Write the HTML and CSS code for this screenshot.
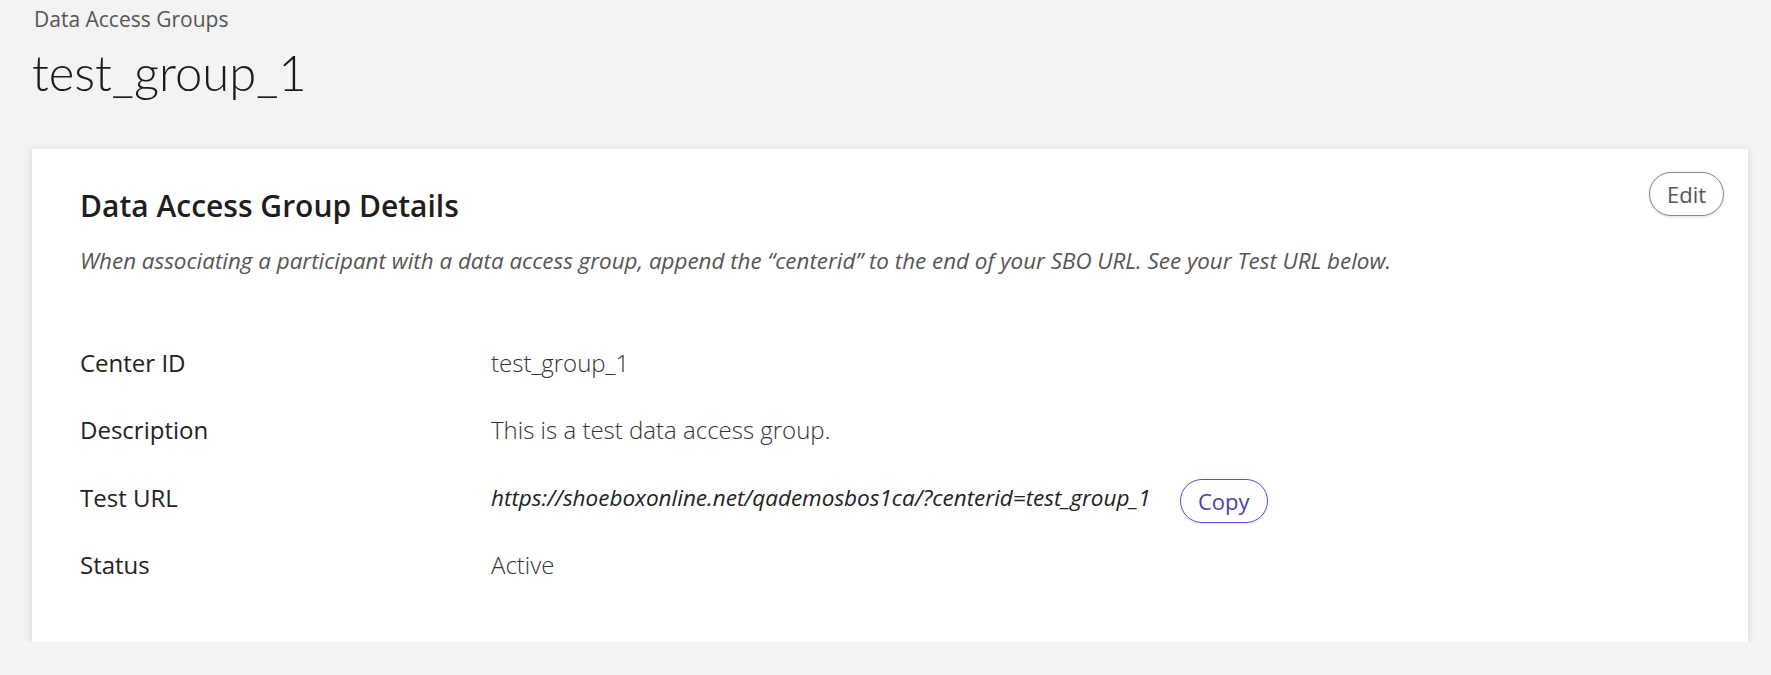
FILE: index.html
```html
<!DOCTYPE html>
<html lang="en">
  <head>
    <meta charset="UTF-8" />
    <meta name="viewport" content="width=device-width, initial-scale=1.0" />
    <title>test_group_1 - Data Access Groups</title>
    <link rel="stylesheet" href="styles.css">
  </head>
  <body>
    <div class="breadcrumb">Data Access Groups</div>
    <h1 class="page-title">test_group_1</h1>

    <section class="card">
      <div class="card-header">
        <h2>Data Access Group Details</h2>
        <button class="pill-btn edit-btn">Edit</button>
      </div>
      <p class="hint">When associating a participant with a data access group, append the “centerid” to the end of your SBO URL. See your Test URL below.</p>

      <div class="details">
        <div class="row">
          <div class="label">Center ID</div>
          <div class="value">test_group_1</div>
        </div>
        <div class="row">
          <div class="label">Description</div>
          <div class="value">This is a test data access group.</div>
        </div>
        <div class="row">
          <div class="label">Test URL</div>
          <div class="value url-cell">
            <span class="url">https://shoeboxonline.net/qademosbos1ca/?centerid=test_group_1</span>
            <button class="pill-btn copy-btn">Copy</button>
          </div>
        </div>
        <div class="row">
          <div class="label">Status</div>
          <div class="value">Active</div>
        </div>
      </div>
    </section>
  </body>
</html>
```

FILE: styles.css
```css
body {
  margin: 0;
  padding: 0 23px 0 32px;
  background-color: #f3f3f3;
  font-family: "Open Sans", "Liberation Sans", sans-serif;
  color: #222;
}

.breadcrumb {
  padding-top: 5px;
  padding-left: 2px;
  font-size: 21px;
  line-height: 28px;
  color: #555;
}

.page-title {
  margin: 10px 0 47px;
  font-family: Lato, "Open Sans", sans-serif;
  font-weight: 300;
  font-size: 49px;
  line-height: 1.2;
  color: #1a1a1a;
}

.card {
  background-color: #fff;
  padding: 23px 24px 43px 48px;
  box-shadow: 0 2px 8px rgba(0, 0, 0, 0.13);
}

.card-header {
  display: flex;
  justify-content: space-between;
  align-items: flex-start;
}

.card-header h2 {
  margin: 17px 0 0;
  font-size: 30px;
  line-height: 34px;
  font-weight: 600;
  color: #1e1e1e;
}

.hint {
  margin: 21px 0 0;
  font-size: 22.4px;
  line-height: 33px;
  font-style: italic;
  color: #555;
}

.details {
  margin-top: 52px;
}

.row {
  display: grid;
  grid-template-columns: 411px 1fr;
  padding: 17px 0 17.5px;
  font-size: 24px;
  line-height: 33px;
}

.label {
  color: #222;
}

.value {
  font-weight: 300;
  color: #333;
}

.url-cell {
  display: flex;
  align-items: flex-start;
  gap: 29px;
}

.url {
  font-size: 22.5px;
  font-style: italic;
  font-weight: 400;
  color: #222;
}

.pill-btn {
  height: 44px;
  padding: 0 16px;
  background-color: #fff;
  border-radius: 22px;
  font-family: "Open Sans", sans-serif;
  font-size: 22px;
  cursor: pointer;
}

.edit-btn {
  width: 75px;
  border: 1px solid #888;
  color: #555;
  box-shadow: 0 1px 3px rgba(0, 0, 0, 0.15);
}

.copy-btn {
  width: 88px;
  margin: -2px 0 -9px;
  border: 1px solid #5a4fc0;
  color: #4a3fb0;
  box-shadow: 0 1px 3px rgba(0, 0, 0, 0.1);
}
```
